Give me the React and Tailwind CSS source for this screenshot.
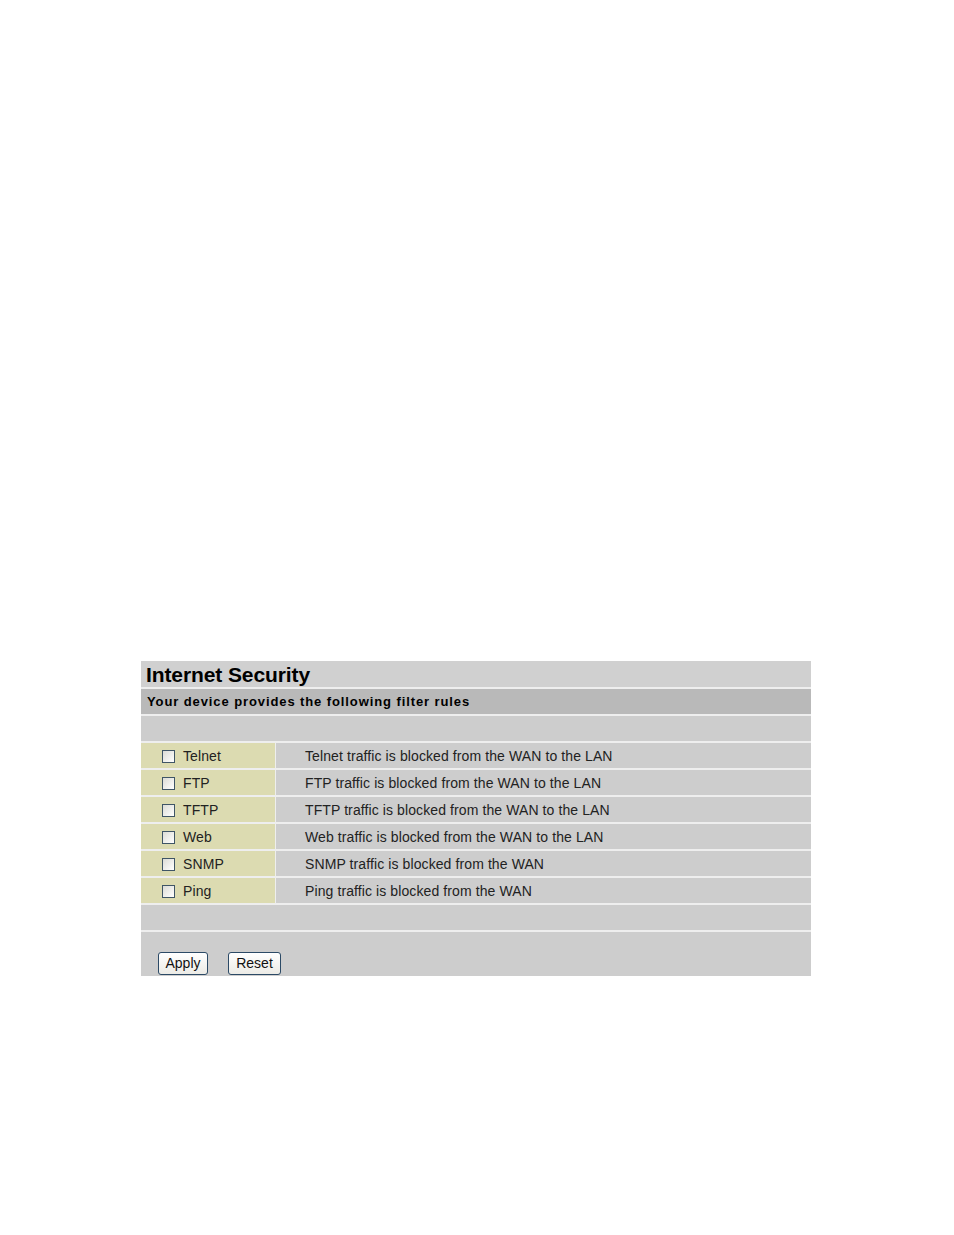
import React from "react";

const rows = [
  ["Telnet", "Telnet traffic is blocked from the WAN to the LAN"],
  ["FTP", "FTP traffic is blocked from the WAN to the LAN"],
  ["TFTP", "TFTP traffic is blocked from the WAN to the LAN"],
  ["Web", "Web traffic is blocked from the WAN to the LAN"],
  ["SNMP", "SNMP traffic is blocked from the WAN"],
  ["Ping", "Ping traffic is blocked from the WAN"],
];

function Box() {
  return (
    <span className="inline-block w-[13px] h-[13px] border border-[#3f5566] bg-gradient-to-br from-[#dcdcd6] to-[#ffffff] shrink-0" />
  );
}

export default function App() {
  return (
    <div className="w-[954px] h-[1235px] bg-white font-['Liberation_Sans',Arial,sans-serif] text-[#1a1a1a]">
      <div className="pt-[661px] pl-[141px]">
        <div className="w-[670px] flex flex-col gap-[2px] bg-[#eeeeee]">
          <div className="h-[26px] bg-[#d0d0d0] flex items-center pl-[5px] pt-[1px]">
            <span className="text-[21px] font-bold tracking-[-0.1px] text-black">Internet Security</span>
          </div>
          <div className="h-[25px] bg-[#b9b9b9] flex items-center pl-[6px] pt-[1px]">
            <span className="text-[13px] font-bold tracking-[0.9px] text-black">Your device provides the following filter rules</span>
          </div>
          <div className="h-[25px] bg-[#cdcdcd]" />
          {rows.map(([name, desc]) => (
            <div key={name} className="h-[25px] flex gap-[1px]">
              <div className="w-[134px] bg-[#dcdbb1] flex items-center pl-[21px] gap-[8px] pt-[2px]">
                <Box />
                <span className="text-[14px] tracking-[0.1px] text-[#222]">{name}</span>
              </div>
              <div className="flex-1 bg-[#cdcdcd] flex items-center pl-[29px] pt-[2px]">
                <span className="text-[14px] tracking-[0.1px] text-[#222]">{desc}</span>
              </div>
            </div>
          ))}
          <div className="h-[25px] bg-[#cdcdcd]" />
          <div className="h-[44px] bg-[#cdcdcd] flex items-end pl-[17px] pb-[1px] gap-[20px]">
            <button className="h-[23px] w-[50px] rounded-[3px] border border-[#2c4a66] bg-gradient-to-b from-[#ffffff] to-[#ecebe6] text-[14px] text-[#111]">Apply</button>
            <button className="h-[23px] w-[53px] rounded-[3px] border border-[#2c4a66] bg-gradient-to-b from-[#ffffff] to-[#ecebe6] text-[14px] text-[#111]">Reset</button>
          </div>
        </div>
      </div>
    </div>
  );
}
